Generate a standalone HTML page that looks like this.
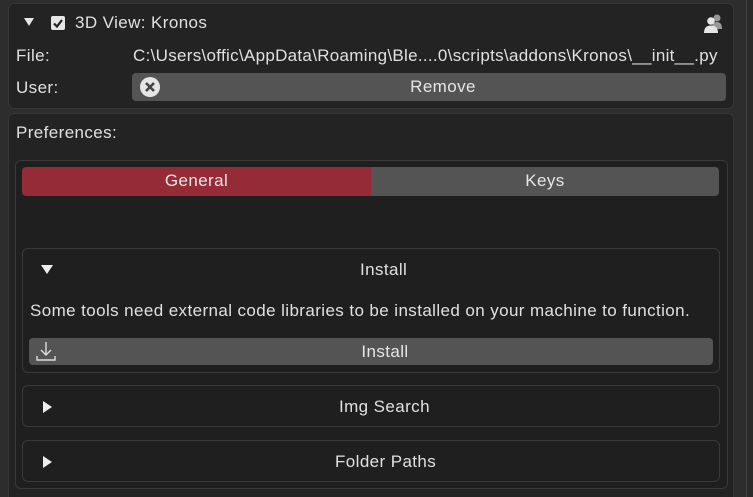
<!DOCTYPE html>
<html style="overflow:hidden"><head><style>
body{margin:0;width:753px;height:497px;background:#2d2d2d;position:relative;overflow:hidden;font-family:"Liberation Sans",sans-serif;font-size:17px;letter-spacing:0.4px;color:#e0e0e0}
div{position:absolute;box-sizing:border-box}
.p{background:#232323;border:1px solid #363636;border-radius:6px}
.b{background:#1f1f1f;border:1px solid #3a3a3a;border-radius:6px}
.btn{background:#545454;border-radius:4px;text-align:center;line-height:28px;color:#e6e6e6}
.t{white-space:nowrap}
.tri{width:0;height:0}
</style></head><body>
<div style="left:746px;top:0;width:1px;height:497px;background:#444"></div>
<div style="left:747px;top:0;width:6px;height:497px;background:#2a2a2a"></div>
<div class="p" style="left:8px;top:3px;width:726px;height:106px"></div>
<div class="tri" style="left:24px;top:18px;border-left:5px solid transparent;border-right:5px solid transparent;border-top:8px solid #e6e6e6"></div>
<div style="left:51px;top:16px;width:14px;height:14px;background:#e6e6e6;border-radius:2px"></div>
<svg style="position:absolute;left:51px;top:16px" width="14" height="14"><path d="M3 7.5 L6 10.5 L11 4" stroke="#222" stroke-width="2.2" fill="none"/></svg>
<div class="t" style="left:75px;top:13px">3D View: Kronos</div>
<svg style="position:absolute;left:702px;top:12px" width="22" height="22"><circle cx="15" cy="6" r="3.5" fill="#999"/><path d="M10 17 Q10 10 15 10 Q20 10 20 17Z" fill="#999"/><circle cx="9" cy="9" r="3.8" fill="#e6e6e6"/><path d="M2 21 Q2 13.5 9 13.5 Q16 13.5 16 21Z" fill="#e6e6e6"/></svg>
<div class="t" style="left:16px;top:46px">File:</div>
<div class="t" style="left:133px;top:46px;letter-spacing:0.3px">C:\Users\offic\AppData\Roaming\Ble....0\scripts\addons\Kronos\__init__.py</div>
<div class="t" style="left:16px;top:78px">User:</div>
<div class="btn" style="left:132px;top:73px;width:594px;height:28px;padding-left:28px">Remove</div>
<svg style="position:absolute;left:139px;top:76px" width="22" height="22"><circle cx="11" cy="11" r="10" fill="#e6e6e6"/><path d="M7 7 L15 15 M15 7 L7 15" stroke="#444" stroke-width="2.6"/></svg>
<div class="p" style="left:8px;top:113px;width:726px;height:384px;border-bottom:none;border-radius:6px 6px 0 0"></div>
<div class="t" style="left:16px;top:123px">Preferences:</div>
<div class="b" style="left:15px;top:160px;width:713px;height:329px"></div>
<div class="btn" style="left:22px;top:167px;width:349px;height:29px;background:#952b37;border-radius:4px 0 0 4px">General</div>
<div class="btn" style="left:371px;top:167px;width:348px;height:29px;border-radius:0 4px 4px 0">Keys</div>
<div class="b" style="left:22px;top:248px;width:698px;height:125px"></div>
<div class="tri" style="left:41px;top:265px;border-left:6px solid transparent;border-right:6px solid transparent;border-top:9px solid #eee"></div>
<div class="t" style="left:360px;top:260px">Install</div>
<div class="t" style="left:30px;top:301px">Some tools need external code libraries to be installed on your machine to function.</div>
<div class="btn" style="left:29px;top:338px;width:684px;height:27px;line-height:27px;padding-left:28px">Install</div>
<svg style="position:absolute;left:35px;top:340px" width="22" height="22"><path d="M11 2 V15 M6 10 L11 15 L16 10 M2 16 V20 H20 V16" stroke="#ddd" stroke-width="1.4" fill="none"/></svg>
<div class="b" style="left:22px;top:385px;width:698px;height:42px"></div>
<div class="tri" style="left:43px;top:401px;border-top:6px solid transparent;border-bottom:6px solid transparent;border-left:9px solid #eee"></div>
<div class="t" style="left:339px;top:397px">Img Search</div>
<div class="b" style="left:22px;top:440px;width:698px;height:42px"></div>
<div class="tri" style="left:43px;top:456px;border-top:6px solid transparent;border-bottom:6px solid transparent;border-left:9px solid #eee"></div>
<div class="t" style="left:335px;top:452px">Folder Paths</div>
</body></html>
